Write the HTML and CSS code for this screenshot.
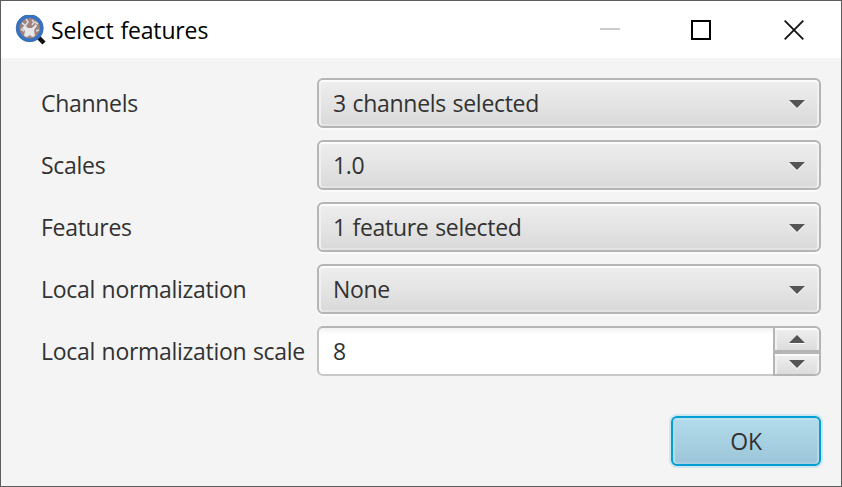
FILE: index.html
```html
<!DOCTYPE html>
<html lang="en">
<head>
<meta charset="utf-8">
<title>Select features</title>
<link rel="stylesheet" href="styles.css">
</head>
<body>
<div class="window">
  <header class="titlebar">
    <svg class="app-icon" width="32" height="32" viewBox="0 0 32 32">
      <path d="M23 22l6 6" stroke="#111" stroke-width="4.4"/>
      <circle cx="14.7" cy="13.2" r="12" fill="#a0827a" stroke="#3574c4" stroke-width="3.4"/>
      <circle cx="14.7" cy="13.2" r="13.6" fill="none" stroke="#3c5f8c" stroke-width=".5"/>
      <path d="M10 10l3 3h4l4-4 1 2-3 4 1 6-3 1-2-2-3 2-3-1 1-5-3-3z" fill="#e4e8ec"/>
      <path d="M7 8l4 3M11 4l2 3-2 3M17 5l2 2-2 3M6 14l3 2M21 16l3-1M20 7l3 2" stroke="#d8dce2" stroke-width="1.6" fill="none"/>
    </svg>
    <h1 class="title">Select features</h1>
    <div class="controls">
      <svg width="20" height="20" viewBox="0 0 20 20"><path d="M0 9h20" stroke="#ccc" stroke-width="2"/></svg>
      <svg width="20" height="20" viewBox="0 0 20 20"><path d="M1 1h18v18H1z" fill="none" stroke="#000" stroke-width="2"/></svg>
      <svg width="20" height="20" viewBox="0 0 20 20"><path d="M.7.7l18.6 18.6M19.3.7L.7 19.3" stroke="#111" stroke-width="1.8"/></svg>
    </div>
  </header>
  <main class="form">
    <span class="label">Channels</span>
    <div class="combo"><span>3 channels selected</span><svg class="arrow" width="16" height="9" viewBox="0 0 16 9"><path d="M0 1h16L8 9z" fill="#fff"/><path d="M0 0h16L8 8z" fill="#555"/></svg></div>
    <span class="label">Scales</span>
    <div class="combo"><span>1.0</span><svg class="arrow" width="16" height="9" viewBox="0 0 16 9"><path d="M0 1h16L8 9z" fill="#fff"/><path d="M0 0h16L8 8z" fill="#555"/></svg></div>
    <span class="label">Features</span>
    <div class="combo"><span>1 feature selected</span><svg class="arrow" width="16" height="9" viewBox="0 0 16 9"><path d="M0 1h16L8 9z" fill="#fff"/><path d="M0 0h16L8 8z" fill="#555"/></svg></div>
    <span class="label">Local normalization</span>
    <div class="combo"><span>None</span><svg class="arrow" width="16" height="9" viewBox="0 0 16 9"><path d="M0 1h16L8 9z" fill="#fff"/><path d="M0 0h16L8 8z" fill="#555"/></svg></div>
    <span class="label">Local normalization scale</span>
    <div class="spinner">
      <span class="value">8</span>
      <div class="steps">
        <div class="step up"><svg width="16" height="9" viewBox="0 0 16 9"><path d="M0 8h16v1H0z" fill="#fff"/><path d="M0 8h16L8 0z" fill="#555"/></svg></div>
        <div class="step down"><svg width="16" height="9" viewBox="0 0 16 9"><path d="M0 1h16L8 9z" fill="#fff"/><path d="M0 0h16L8 8z" fill="#555"/></svg></div>
      </div>
    </div>
  </main>
  <footer class="actions"><div class="ok"><span>OK</span></div></footer>
</div>
</body>
</html>
```
FILE: styles.css
```css
* { box-sizing: border-box; }
body {
  margin: 0;
  font: 23px/32px "Open Sans", "Noto Sans", sans-serif;
  letter-spacing: -0.3px;
  word-spacing: 1px;
  color: #323232;
}
.window {
  width: 842px;
  height: 487px;
  border: 1px solid #5c5e5e;
  background: #f4f4f4;
  overflow: hidden;
  white-space: nowrap;
}
.titlebar {
  display: flex;
  align-items: center;
  height: 57px;
  padding: 0 37px 0 14px;
  background: #fff;
}
.app-icon { margin-top: 2px; }
.title {
  margin: 0 0 0 4px;
  font-size: 23px;
  font-weight: 400;
  letter-spacing: -0.15px;
  color: #000;
}
.controls {
  display: flex;
  margin-left: auto;
}
.controls svg:nth-child(2) { margin: 0 73px 0 71px; }
.form {
  display: grid;
  grid-template-columns: 264px 504px;
  grid-auto-rows: 50px;
  gap: 12px;
  align-items: center;
  padding: 20px 0 0 40px;
}
.combo {
  display: flex;
  align-items: center;
  justify-content: space-between;
  height: 50px;
  padding: 0 14px;
  border: 2px solid #b5b5b5;
  border-radius: 6px;
  background: linear-gradient(#efefef, #d9d9d9);
  box-shadow: 0 2px 0 #fbfbfb, inset 0 2px 0 #fcfcfc, inset 2px 0 0 #f1f1f1, inset -2px 0 0 #f1f1f1, inset 0 -2px 0 #e3e3e3;
}
.arrow { margin-top: 3px; }
.spinner {
  display: flex;
  height: 50px;
  border-radius: 6px;
}
.value {
  width: 456px;
  padding: 7px 14px;
  border: 2px solid #bbb;
  border-right: 0;
  border-color: #b5b5b5 #b5b5b5 #c9c9c9 #c1c1c1;
  border-radius: 6px 0 0 6px;
  background: linear-gradient(#f3f3f3, #fff 7px);
}
.steps { width: 48px; }
.step {
  display: flex;
  align-items: center;
  justify-content: center;
  border: 2px solid #b5b5b5;
  background: linear-gradient(#efefef, #dcdcdc);
  box-shadow: inset 0 2px 0 #fbfbfb, inset 2px 0 0 #f1f1f1, inset -2px 0 0 #f1f1f1;
}
.up { height: 26px; border-radius: 0 6px 0 0; }
.down { height: 24px; border-radius: 0 0 6px 0; }
.actions {
  display: flex;
  justify-content: flex-end;
  padding: 40px 20px 0 0;
}
.ok {
  width: 150px;
  height: 50px;
  padding: 7px 0;
  border: 2px solid #039ed3;
  border-radius: 6px;
  background: linear-gradient(#b3dceb, #9cc5d9);
  box-shadow: 0 0 0 2px #cfe7ef, inset 0 2px 0 #bee2ee, inset 2px 0 0 #b4dae9, inset -2px 0 0 #b4dae9, inset 0 -2px 0 #a8cddf;
  text-align: center;
}
```
